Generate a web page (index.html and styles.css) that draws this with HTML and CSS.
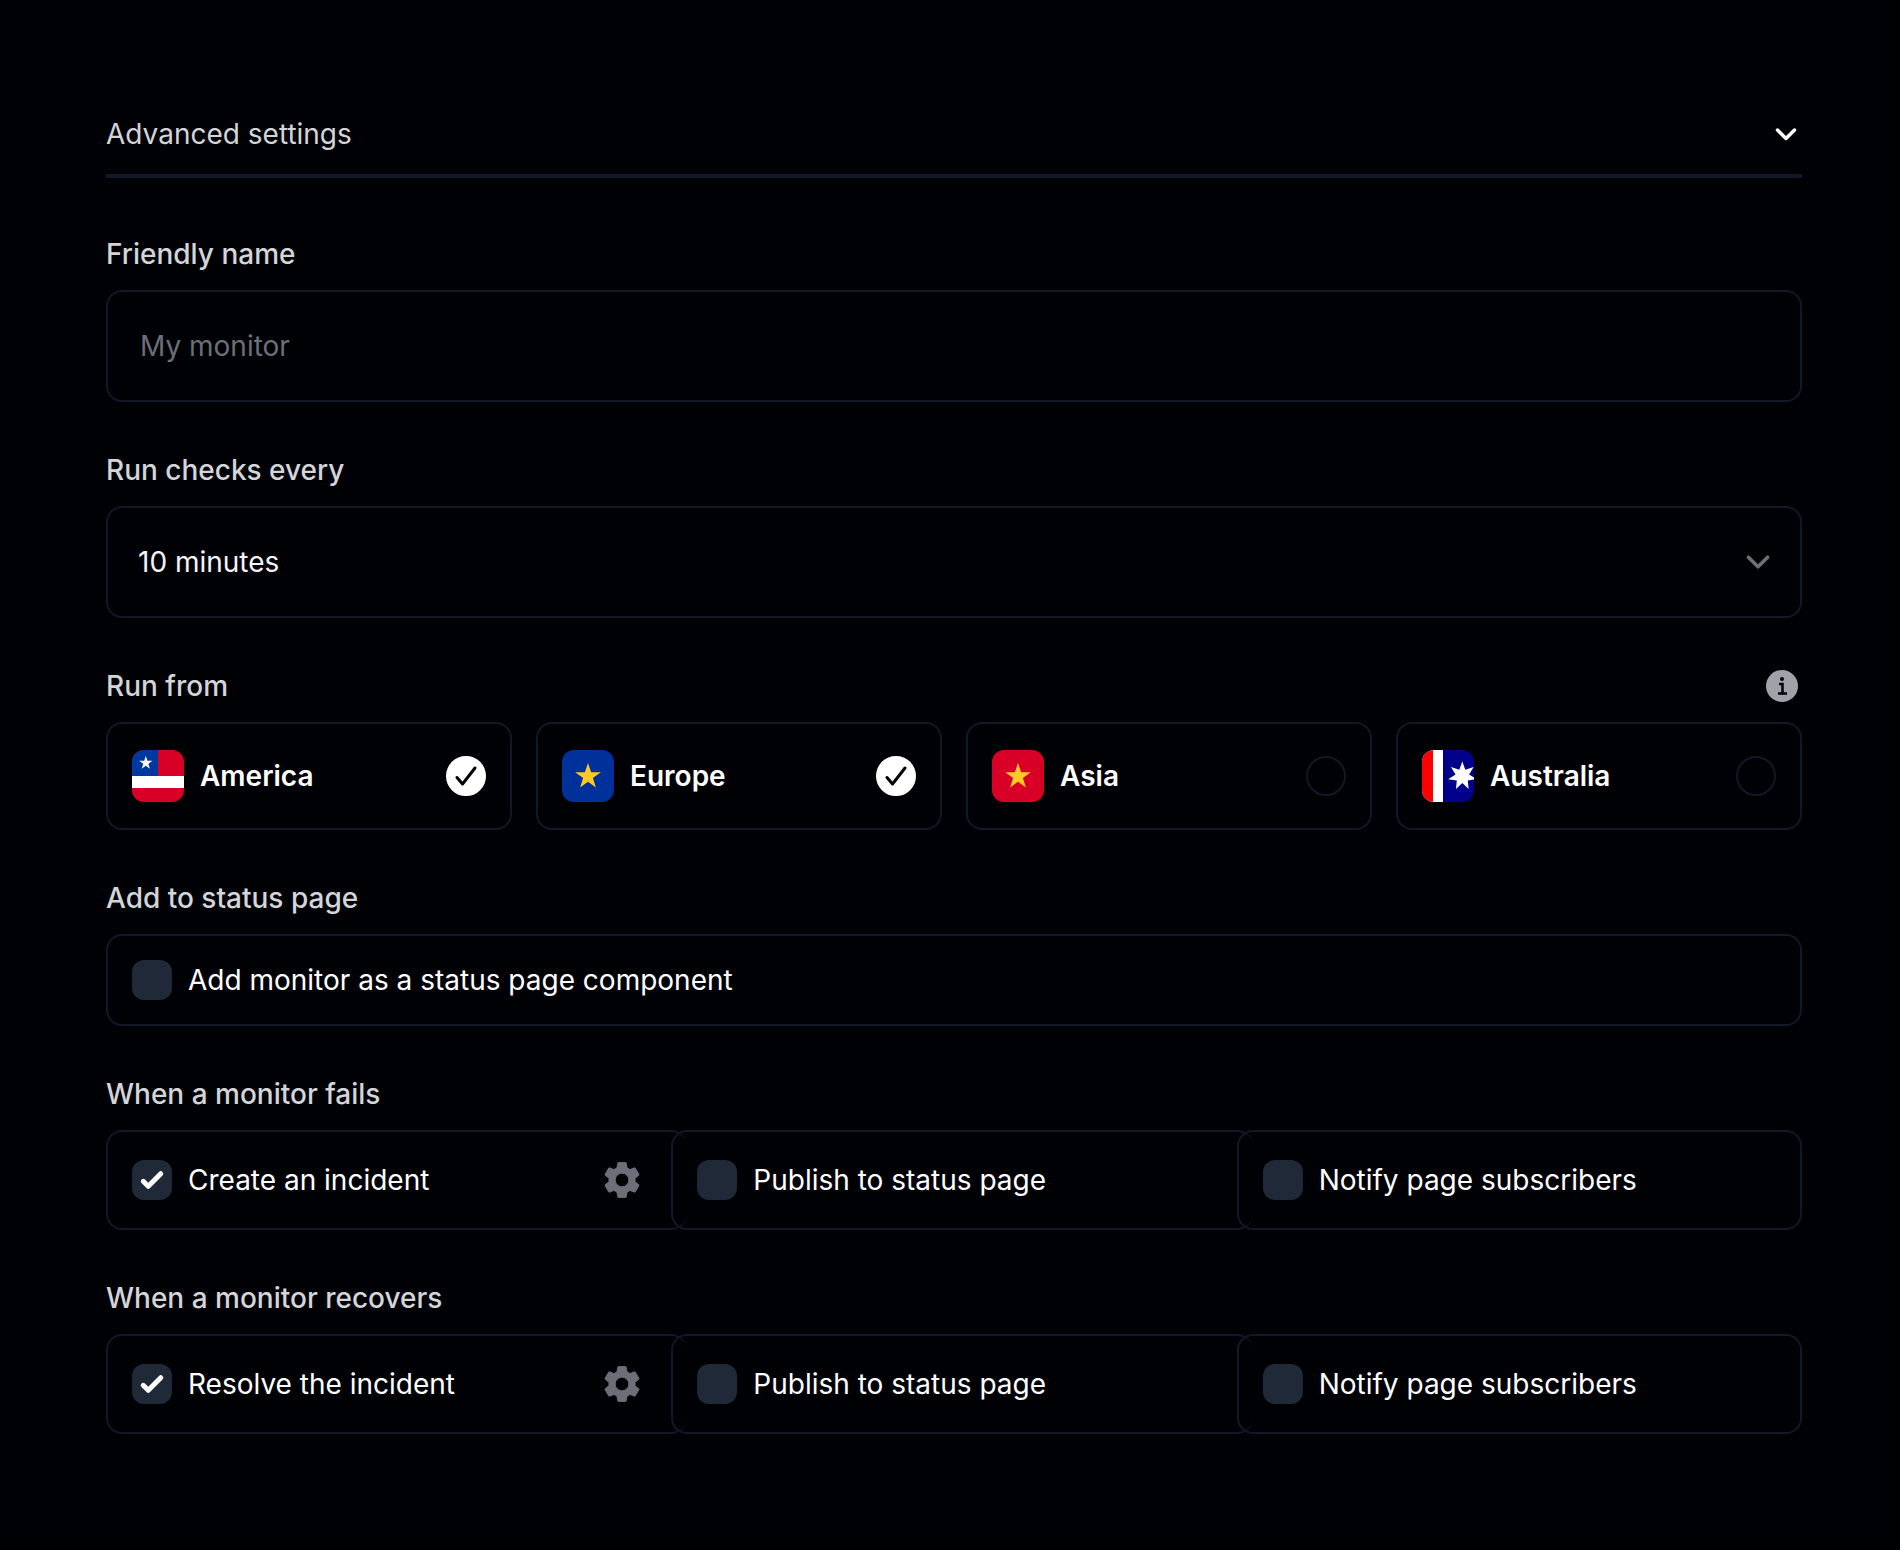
FILE: index.html
```html
<!DOCTYPE html>
<html lang="en">
<head>
    <meta charset="UTF-8">
    <meta name="viewport" content="width=device-width, initial-scale=1.0">
    <title>Advanced settings</title>
    <link rel="stylesheet" href="styles.css">
</head>
<body>
    <form class="settings">
        <button type="button" class="settings-header">
            <span>Advanced settings</span>
            <svg class="toggle-icon" viewBox="0 0 32 32" aria-hidden="true"><path d="M7.5 12l8.5 8.5 8.5-8.5"/></svg>
        </button>

        <div class="field">
            <label class="field-label" for="friendly-name">Friendly name</label>
            <input type="text" id="friendly-name" class="text-input" placeholder="My monitor">
        </div>

        <div class="field">
            <label class="field-label" for="interval">Run checks every</label>
            <div class="select-wrap">
                <select id="interval" class="select-input">
                    <option>1 minute</option>
                    <option>5 minutes</option>
                    <option selected>10 minutes</option>
                    <option>30 minutes</option>
                </select>
                <svg class="select-icon" viewBox="0 0 20 20" aria-hidden="true"><path d="M6 8l4 4 4-4"/></svg>
            </div>
        </div>

        <div class="field" role="group" aria-labelledby="run-from">
            <div class="field-label">
                <span id="run-from">Run from</span>
                <button type="button" class="info-button" aria-label="About regions">
                    <svg viewBox="0 0 32 32">
                        <circle cx="16" cy="16" r="16" fill="#a0a2a9"/>
                        <circle cx="16" cy="9" r="2"/>
                        <path d="M13 14h3.5v9M12 23.500h9" fill="none" stroke="#000" stroke-width="2.5"/>
                    </svg>
                </button>
            </div>
            <div class="regions">
                <label class="region">
                    <svg class="flag" viewBox="0 0 52 52" aria-hidden="true">
                        <rect width="52" height="52" fill="#d80027"/>
                        <rect width="26" height="26" fill="#0038a0"/>
                        <rect y="26" width="52" height="12" fill="#fff"/>
                        <polygon transform="translate(.3 -.8) scale(.52)" fill="#fff" points="26,13 29.1,22.3 38.8,22.3 30.9,28.1 33.9,37.4 26,31.7 18.1,37.4 21.1,28.1 13.2,22.3 22.9,22.3"/>
                    </svg>
                    <span class="region-name">America</span>
                    <span class="tick round">
                        <input type="checkbox" checked>
                        <svg viewBox="0 0 40 40" aria-hidden="true"><path d="M11 21.5l5.5 6.5 12.5-16"/></svg>
                    </span>
                </label>
                <label class="region">
                    <svg class="flag" viewBox="0 0 52 52" aria-hidden="true">
                        <rect width="52" height="52" fill="#00309a"/>
                        <polygon fill="#ffca28" points="26,13 29.1,22.3 38.8,22.3 30.9,28.1 33.9,37.4 26,31.7 18.1,37.4 21.1,28.1 13.2,22.3 22.9,22.3"/>
                    </svg>
                    <span class="region-name">Europe</span>
                    <span class="tick round">
                        <input type="checkbox" checked>
                        <svg viewBox="0 0 40 40" aria-hidden="true"><path d="M11 21.5l5.5 6.5 12.5-16"/></svg>
                    </span>
                </label>
                <label class="region">
                    <svg class="flag" viewBox="0 0 52 52" aria-hidden="true">
                        <rect width="52" height="52" fill="#d80027"/>
                        <polygon fill="#ffca28" points="26,13 29.1,22.3 38.8,22.3 30.9,28.1 33.9,37.4 26,31.7 18.1,37.4 21.1,28.1 13.2,22.3 22.9,22.3"/>
                    </svg>
                    <span class="region-name">Asia</span>
                    <span class="tick round">
                        <input type="checkbox">
                        <svg viewBox="0 0 40 40" aria-hidden="true"><path d="M11 21.5l5.5 6.5 12.5-16"/></svg>
                    </span>
                </label>
                <label class="region">
                    <svg class="flag" viewBox="0 0 52 52" aria-hidden="true">
                        <rect width="52" height="52" fill="#00008b"/>
                        <rect width="21" height="52" fill="#fff"/>
                        <rect width="11" height="52" fill="#f00"/>
                        <polygon fill="#fff" points="40.3,11.5 43.3,19.7 51.6,17 47.1,24.4 54.4,29.2 45.8,30.4 46.6,39.1 40.3,33 34,39.1 34.8,30.4 26.2,29.2 33.5,24.4 29,17 37.3,19.7"/>
                    </svg>
                    <span class="region-name">Australia</span>
                    <span class="tick round">
                        <input type="checkbox">
                        <svg viewBox="0 0 40 40" aria-hidden="true"><path d="M11 21.5l5.5 6.5 12.5-16"/></svg>
                    </span>
                </label>
            </div>
        </div>

        <div class="field" role="group" aria-labelledby="status-page">
            <div class="field-label" id="status-page">Add to status page</div>
            <div class="option compact">
                <label class="option-label">
                    <span class="tick">
                        <input type="checkbox">
                        <svg viewBox="0 0 16 16" aria-hidden="true"><use href="#check"/></svg>
                    </span>
                    Add monitor as a status page component
                </label>
            </div>
        </div>

        <div class="field" role="group" aria-labelledby="on-fail">
            <div class="field-label" id="on-fail">When a monitor fails</div>
            <div class="options">
                <div class="option">
                    <label class="option-label">
                        <span class="tick">
                            <input type="checkbox" checked>
                            <svg viewBox="0 0 16 16" aria-hidden="true"><use href="#check"/></svg>
                        </span>
                        Create an incident
                    </label>
                    <button type="button" class="gear-button" aria-label="Incident settings">
                        <svg viewBox="0 0 24 24"><use href="#gear"/></svg>
                    </button>
                </div>
                <div class="option">
                    <label class="option-label">
                        <span class="tick">
                            <input type="checkbox">
                            <svg viewBox="0 0 16 16" aria-hidden="true"><use href="#check"/></svg>
                        </span>
                        Publish to status page
                    </label>
                </div>
                <div class="option">
                    <label class="option-label">
                        <span class="tick">
                            <input type="checkbox">
                            <svg viewBox="0 0 16 16" aria-hidden="true"><use href="#check"/></svg>
                        </span>
                        Notify page subscribers
                    </label>
                </div>
            </div>
        </div>

        <div class="field" role="group" aria-labelledby="on-recover">
            <div class="field-label" id="on-recover">When a monitor recovers</div>
            <div class="options">
                <div class="option">
                    <label class="option-label">
                        <span class="tick">
                            <input type="checkbox" checked>
                            <svg viewBox="0 0 16 16" aria-hidden="true"><use href="#check"/></svg>
                        </span>
                        Resolve the incident
                    </label>
                    <button type="button" class="gear-button" aria-label="Resolution settings">
                        <svg viewBox="0 0 24 24"><use href="#gear"/></svg>
                    </button>
                </div>
                <div class="option">
                    <label class="option-label">
                        <span class="tick">
                            <input type="checkbox">
                            <svg viewBox="0 0 16 16" aria-hidden="true"><use href="#check"/></svg>
                        </span>
                        Publish to status page
                    </label>
                </div>
                <div class="option">
                    <label class="option-label">
                        <span class="tick">
                            <input type="checkbox">
                            <svg viewBox="0 0 16 16" aria-hidden="true"><use href="#check"/></svg>
                        </span>
                        Notify page subscribers
                    </label>
                </div>
            </div>
        </div>
    </form>

    <!-- shared icons -->
    <svg class="icon-defs" aria-hidden="true">
        <symbol id="check" viewBox="0 0 16 16">
            <path d="M12.207 4.793a1 1 0 010 1.414l-5 5a1 1 0 01-1.414 0l-2-2a1 1 0 011.414-1.414L6.5 9.086l4.293-4.293a1 1 0 011.414 0z"/>
        </symbol>
        <symbol id="gear" viewBox="0 0 24 24">
            <path fill-rule="evenodd" d="M19.43 12.98c.04-.32.07-.64.07-.98s-.03-.66-.07-.98l2.11-1.65c.19-.15.24-.42.12-.64l-2-3.46c-.12-.22-.39-.3-.61-.22l-2.49 1c-.52-.4-1.08-.73-1.69-.98l-.38-2.65C14.46 2.18 14.25 2 14 2h-4c-.25 0-.46.18-.49.42l-.38 2.65c-.61.25-1.17.59-1.69.98l-2.49-1c-.23-.09-.49 0-.61.22l-2 3.46c-.13.22-.07.49.12.64l2.11 1.65c-.04.32-.07.65-.07.98s.03.66.07.98l-2.11 1.65c-.19.15-.24.42-.12.64l2 3.46c.12.22.39.3.61.22l2.49-1c.52.4 1.08.73 1.69.98l.38 2.65c.03.24.24.42.49.42h4c.25 0 .46-.18.49-.42l.38-2.65c.61-.25 1.17-.59 1.69-.98l2.49 1c.23.09.49 0 .61-.22l2-3.46c.12-.22.07-.49-.12-.64l-2.11-1.65zM12 15.900a3.900 3.900 0 100-7.800 3.900 3.900 0 000 7.800z"/>
        </symbol>
    </svg>
</body>
</html>
```
FILE: styles.css
```css
* {
    margin: 0;
    padding: 0;
    box-sizing: border-box;
}

body {
    min-height: 100vh;
    background-color: #000105;
    color: #fff;
    font-family: Inter, "Liberation Sans", sans-serif;
    font-size: 28px;
    line-height: 40px;
}

button,
input,
select {
    font: inherit;
    color: inherit;
    background: none;
    border: none;
}

button {
    cursor: pointer;
}

svg {
    display: block;
}

.icon-defs {
    width: 0;
    height: 0;
}

.settings {
    display: flex;
    flex-direction: column;
    gap: 48px;
    padding: 114px 98px 114px 106px;
}

.settings-header {
    display: flex;
    justify-content: space-between;
    align-items: center;
    padding-bottom: 20px;
    margin-bottom: 8px;
    border-bottom: 4px solid #111827;
    color: #d3d5d9;
}

.toggle-icon {
    width: 32px;
    height: 32px;
    fill: none;
    stroke: #fff;
    stroke-width: 3.5;
    stroke-linecap: round;
    stroke-linejoin: round;
}

.field-label {
    display: flex;
    justify-content: space-between;
    align-items: center;
    margin-bottom: 16px;
    color: #d3d5d9;
    font-weight: 500;
}

.text-input,
.select-input {
    display: block;
    width: 100%;
    height: 112px;
    padding: 0 30px;
    border: 2px solid #111827;
    border-radius: 16px;
}

.text-input {
    padding: 0 32px;
}

.text-input::placeholder {
    color: #6c6f79;
    opacity: 1;
}

.select-wrap {
    position: relative;
}

.select-input {
    appearance: none;
    color: #f3f4f6;
}

.select-input option {
    background-color: #111827;
}

.select-icon {
    position: absolute;
    top: 32px;
    right: 20px;
    width: 48px;
    height: 48px;
    fill: none;
    stroke: #6c6f79;
    stroke-width: 1.5;
    stroke-linecap: round;
    stroke-linejoin: round;
    pointer-events: none;
}

.info-button {
    width: 32px;
    height: 32px;
    margin-right: 4px;
}

.regions {
    display: grid;
    grid-template-columns: repeat(4, 1fr);
    gap: 24px;
}

.region {
    display: flex;
    align-items: center;
    gap: 16px;
    padding: 26px 24px;
    border: 2px solid #111827;
    border-radius: 16px;
    font-weight: 600;
}

.region-name {
    flex: 1;
}

.flag {
    width: 52px;
    height: 52px;
    border-radius: 12px;
}

/* checkbox with the mark stacked on top */
.tick {
    display: grid;
    width: 40px;
    height: 40px;
}

.tick input,
.tick svg {
    grid-area: 1 / 1;
    width: 40px;
    height: 40px;
}

.tick input {
    appearance: none;
    border-radius: 12px;
    background-color: #1f2937;
}

.tick svg {
    visibility: hidden;
    fill: #fff;
    pointer-events: none;
}

.tick input:checked + svg {
    visibility: visible;
}

.tick.round input {
    border: 2px solid #111827;
    border-radius: 50%;
    background: none;
}

.tick.round input:checked {
    border-color: #fff;
    background-color: #fff;
}

.tick.round svg {
    fill: none;
    stroke: #000105;
    stroke-width: 3;
    stroke-linecap: round;
    stroke-linejoin: round;
}

.options {
    display: grid;
    grid-template-columns: repeat(3, 1fr);
}

.option {
    display: flex;
    justify-content: space-between;
    align-items: center;
    padding: 27px 24px;
    border: 2px solid #111827;
    border-radius: 16px;
}

.option.compact {
    padding: 24px;
}

/* open boxes slide under the next one */
.options .option:not(:last-child) {
    margin-right: -16px;
    padding-right: 44px;
    border-right: none;
}

.option-label {
    display: flex;
    align-items: center;
    gap: 16px;
}

.gear-button svg {
    width: 42px;
    height: 42px;
    fill: #6c6f79;
    stroke: #6c6f79;
    stroke-width: 0.5;
    stroke-linejoin: round;
}
```
